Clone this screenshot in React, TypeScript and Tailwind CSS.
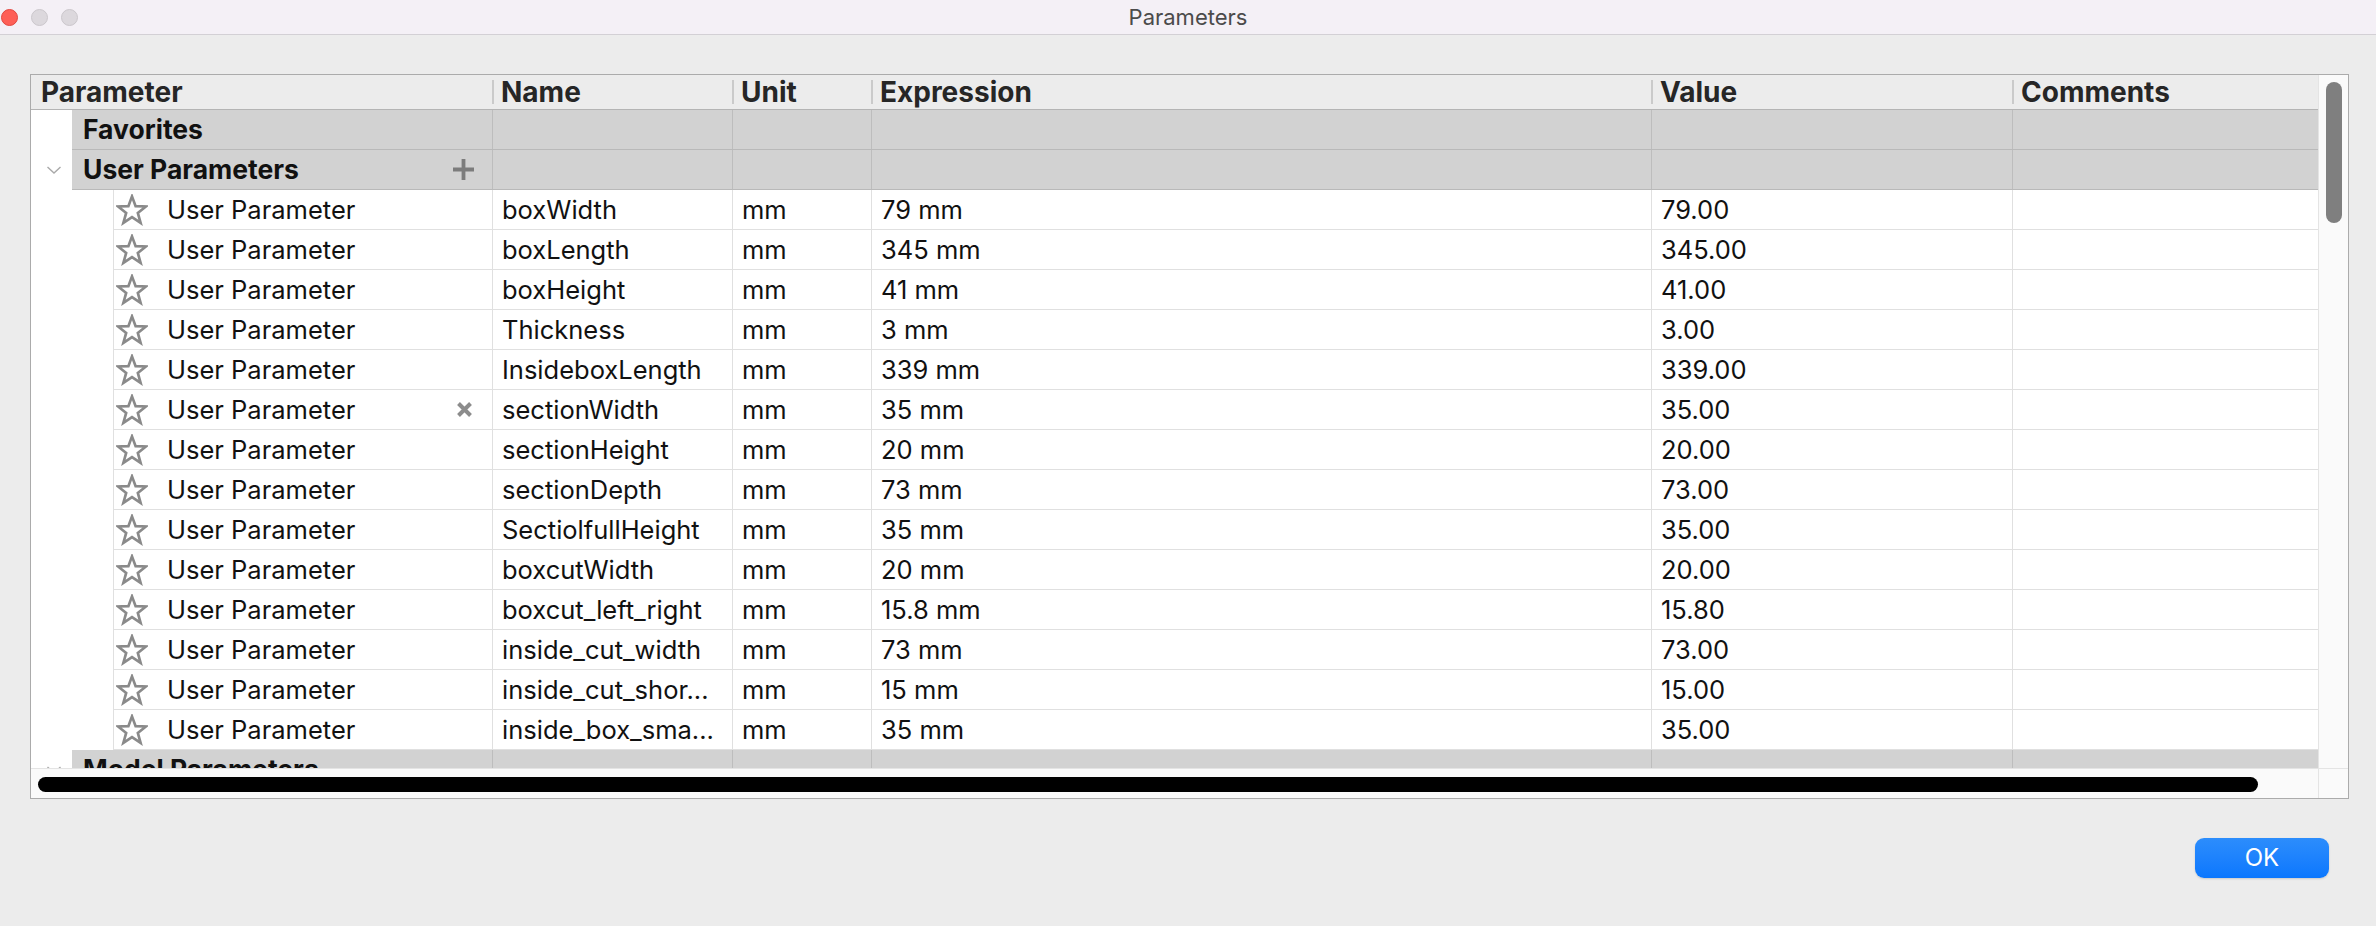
import React from 'react';

const COLS = [461, 240, 139, 780, 361, 306];
const HEADERS = ['Parameter', 'Name', 'Unit', 'Expression', 'Value', 'Comments'];

const PARAMS: [string, string, string][] = [
  ['boxWidth', '79 mm', '79.00'],
  ['boxLength', '345 mm', '345.00'],
  ['boxHeight', '41 mm', '41.00'],
  ['Thickness', '3 mm', '3.00'],
  ['InsideboxLength', '339 mm', '339.00'],
  ['sectionWidth', '35 mm', '35.00'],
  ['sectionHeight', '20 mm', '20.00'],
  ['sectionDepth', '73 mm', '73.00'],
  ['SectiolfullHeight', '35 mm', '35.00'],
  ['boxcutWidth', '20 mm', '20.00'],
  ['boxcut_left_right', '15.8 mm', '15.80'],
  ['inside_cut_width', '73 mm', '73.00'],
  ['inside_cut_shor...', '15 mm', '15.00'],
  ['inside_box_sma...', '35 mm', '35.00'],
];

const Star = () => (
  <svg width="32" height="32" viewBox="0 0 24 24" className="shrink-0">
    <polygon
      points="12,1.8 14.7,9.08 22.46,9.4 16.37,14.22 18.47,21.7 12,17.4 5.53,21.7 7.63,14.22 1.54,9.4 9.3,9.08"
      fill="none"
      stroke="#8a8a8a"
      strokeWidth="2"
      strokeLinejoin="miter"
    />
  </svg>
);

const Chevron = () => (
  <svg width="16" height="10" viewBox="0 0 16 10">
    <polyline points="1.5,2 8,8 14.5,2" fill="none" stroke="#a9a9a9" strokeWidth="1.4" />
  </svg>
);

const Plus = () => (
  <svg width="23" height="23" viewBox="0 0 23 23">
    <path d="M11.5 1v21M1 11.5h21" stroke="#7c7c7c" strokeWidth="3.8" />
  </svg>
);

const Cross = () => (
  <svg width="17" height="17" viewBox="0 0 17 17">
    <path d="M2.5 2.5l12 12M14.5 2.5l-12 12" stroke="#8c8c8c" strokeWidth="4" />
  </svg>
);

function GroupRow({ label, open, plus }: { label: string; open?: boolean; plus?: boolean }) {
  return (
    <div className="flex h-[40px] shrink-0">
      <div className="w-[41px] shrink-0 flex items-center justify-center pl-[4px] bg-white">
        {open && <Chevron />}
      </div>
      <div className="flex flex-1 bg-[#d2d2d2] border-b border-[#b9b9b9]">
        <div className="w-[420px] shrink-0 flex items-center justify-between pl-[11px] pr-[17px]">
          <span className="text-[26.5px] leading-none font-bold text-[#111]">{label}</span>
          {plus && <Plus />}
        </div>
        {COLS.slice(1).map((w, i) => (
          <div key={i} style={{ width: w }} className="shrink-0 border-l border-[#bdbdbd]" />
        ))}
      </div>
    </div>
  );
}

function DataRow({ name, expr, value, cross }: { name: string; expr: string; value: string; cross?: boolean }) {
  const cells = [name, 'mm', expr, value, ''];
  return (
    <div className="flex h-[40px] shrink-0">
      <div className="w-[82px] shrink-0 bg-white" />
      <div className="flex flex-1 border-l border-b border-[#e0e0e0] bg-white">
        <div className="w-[378px] shrink-0 flex items-center pl-[2px] pr-[19px]">
          <Star />
          <span className="ml-[19px] text-[25.5px] leading-none text-[#111] flex-1">User Parameter</span>
          {cross && <Cross />}
        </div>
        {cells.map((c, i) => (
          <div
            key={i}
            style={{ width: COLS[i + 1] }}
            className="shrink-0 border-l border-[#e0e0e0] flex items-center pl-[9px] text-[25.5px] leading-none text-[#111] whitespace-nowrap overflow-hidden"
          >
            {c}
          </div>
        ))}
      </div>
    </div>
  );
}

export default function App() {
  return (
    <div className="w-[2376px] h-[926px] bg-[#ececec] flex flex-col overflow-hidden font-['Inter','Noto_Sans',sans-serif]">
      {/* title bar */}
      <div className="h-[35px] shrink-0 bg-[#f4f0f6] border-b border-[#d3d0d5] flex items-center relative">
        <div className="flex items-center gap-[13px] pl-[1px]">
          <span className="w-[17px] h-[17px] rounded-full bg-[#fe5f57] border border-[#e2463f]" />
          <span className="w-[17px] h-[17px] rounded-full bg-[#dcd8dd] border border-[#cbc7cc]" />
          <span className="w-[17px] h-[17px] rounded-full bg-[#dcd8dd] border border-[#cbc7cc]" />
        </div>
        <div className="absolute inset-0 flex items-center justify-center text-[22px] text-[#4b4b4b]">
          Parameters
        </div>
      </div>

      {/* table */}
      <div className="pl-[30px] pt-[39px]">
        <div className="w-[2319px] h-[725px] border border-[#ababab] bg-white flex flex-col">
          <div className="flex flex-1 min-h-0">
            <div className="w-[2287px] shrink-0 flex flex-col">
              <div className="h-[35px] shrink-0 flex bg-[#ececec] border-b border-[#b4b4b4]">
                {HEADERS.map((h, i) => (
                  <div key={h} style={{ width: COLS[i] }} className="shrink-0 flex items-center">
                    {i > 0 && <span className="w-[2px] h-[24px] bg-[#cacaca]" />}
                    <span
                      className={
                        'text-[28px] leading-none font-bold text-[#262626] ' + (i > 0 ? 'ml-[7px]' : 'ml-[10px]')
                      }
                    >
                      {h}
                    </span>
                  </div>
                ))}
              </div>
              <div className="flex-1 min-h-0 overflow-hidden flex flex-col">
                <GroupRow label="Favorites" />
                <GroupRow label="User Parameters" open plus />
                {PARAMS.map(([n, e, v]) => (
                  <DataRow key={n} name={n} expr={e} value={v} cross={n === 'sectionWidth'} />
                ))}
                <GroupRow label="Model Parameters" open />
              </div>
            </div>
            {/* vertical scrollbar */}
            <div className="w-[30px] shrink-0 bg-[#fafafa] border-l border-[#e4e4e4] pl-[7px] pt-[7px]">
              <div className="w-[16px] h-[141px] rounded-full bg-[#7f7f7f]" />
            </div>
          </div>
          {/* horizontal scrollbar */}
          <div className="h-[30px] shrink-0 flex bg-[#fafafa] border-t border-[#e4e4e4]">
            <div className="w-[2287px] shrink-0 pl-[7px] pt-[8px]">
              <div className="w-[2220px] h-[15px] rounded-full bg-black" />
            </div>
            <div className="w-[30px] shrink-0 border-l border-[#e4e4e4]" />
          </div>
        </div>
      </div>

      {/* footer */}
      <div className="flex justify-end pr-[47px] pt-[39px]">
        <button className="w-[134px] h-[40px] rounded-[9px] bg-gradient-to-b from-[#2c8dfc] to-[#0a77fe] text-white text-[24px] shadow-[0_1px_2px_rgba(0,0,0,0.15)] flex items-center justify-center">
          OK
        </button>
      </div>
    </div>
  );
}
